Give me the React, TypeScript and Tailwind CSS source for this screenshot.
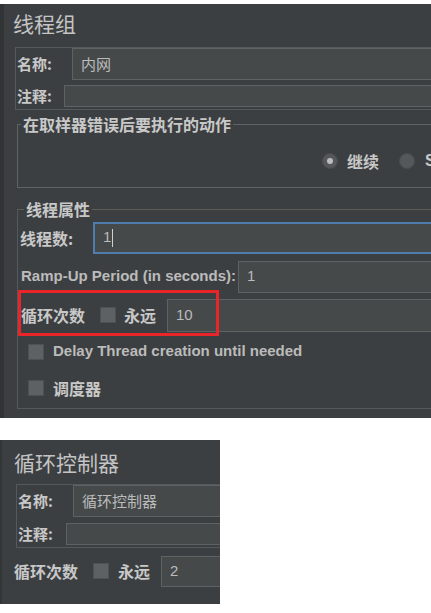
const cjk = { fontFamily: '"Noto Sans CJK SC", "Liberation Sans", sans-serif' };
const latin = { fontFamily: '"Liberation Sans", "Noto Sans CJK SC", sans-serif' };

function Box({ className, children }: { className: string; children?: React.ReactNode }) {
  return (
    <div className={`flex items-center bg-[#45494a] border border-[#5f6263] pl-2 text-[15px] text-[#bbbbbb] ${className}`}>
      {children}
    </div>
  );
}

function Check() {
  return <div className="w-4 h-4 bg-[#5e6163] border border-[#4e5153] shrink-0" />;
}

export default function App() {
  return (
    <div className="w-[431px] h-[613px] bg-white overflow-hidden" style={cjk}>
      <div className="h-1" />

      {/* 线程组 */}
      <div className="relative h-[414px] bg-[#3c3f41] border-l-[4px] border-[#313335] overflow-hidden">
        <div className="pl-[9px] pt-[5px] text-[21px] leading-[28px] text-[#c4c4c4]">线程组</div>

        <div className="mt-[10px] ml-[11px] w-[520px] border border-[#56595b] pb-[1px]">
          <div className="flex items-center">
            <div className="w-[56px] pl-[1px] text-[15px] font-bold text-[#c8c8c8]">名称:</div>
            <Box className="flex-1 h-[32px]">内网</Box>
          </div>
          <div className="flex items-center mt-[5px]">
            <div className="w-[48px] pl-[1px] text-[15px] font-bold text-[#c8c8c8]">注释:</div>
            <Box className="flex-1 h-[22px]" />
          </div>
        </div>

        <div className="relative mt-[14px] ml-[13px] w-[520px] h-[64px] border border-[#606365]">
          <div className="absolute -top-[12px] left-[3px] px-[2px] bg-[#3c3f41] text-[16px] font-bold text-[#c8c8c8] leading-[22px]">
            在取样器错误后要执行的动作
          </div>
          <div className="flex items-center h-full pl-[304px] pt-[10px] text-[16px] font-bold text-[#c8c8c8]">
            <div className="w-4 h-4 rounded-full bg-[#55585a] border border-[#4a4d4f] flex items-center justify-center">
              <div className="w-[6px] h-[6px] rounded-full bg-[#bdbdbd]" />
            </div>
            <span className="ml-[9px]">继续</span>
            <div className="ml-[20px] w-4 h-4 rounded-full bg-[#55585a] border border-[#4a4d4f]" />
            <span className="ml-[10px]" style={latin}>S</span>
          </div>
        </div>

        <div className="relative mt-[21px] ml-[13px] w-[520px] h-[200px] border border-[#56595b] border-t-[#5a5d4f]">
          <div className="absolute -top-[12px] left-[6px] px-[2px] bg-[#3c3f41] text-[16px] font-bold text-[#c8c8c8] leading-[22px]">
            线程属性
          </div>

          <div className="flex items-center mt-[12px]">
            <div className="w-[75px] pl-[2px] text-[16px] font-bold text-[#c8c8c8]">线程数:</div>
            <div className="flex-1 h-[32px] flex items-center pl-2 bg-[#45494a] border-2 border-[#4f7eae] text-[15px] text-[#bbbbbb]" style={latin}>
              1<span className="w-px h-[18px] bg-[#d0d0d0] ml-px" />
            </div>
          </div>

          <div className="flex items-center mt-[7px]">
            <div className="w-[220px] pl-[3px] text-[15px] font-bold text-[#bbbbbb] whitespace-nowrap" style={latin}>
              Ramp-Up Period (in seconds):
            </div>
            <Box className="flex-1 h-[32px]"><span style={latin}>1</span></Box>
          </div>

          <div className="flex items-center mt-[6px]">
            <div className="w-[82px] pl-[3px] text-[16px] font-bold text-[#c8c8c8]">循环次数</div>
            <Check />
            <div className="w-[51px] pl-[8px] text-[16px] font-bold text-[#c8c8c8]">永远</div>
            <Box className="flex-1 h-[33px]"><span style={latin}>10</span></Box>
          </div>

          <div className="flex items-center h-[28px] mt-[6px] pl-[10px]">
            <Check />
            <span className="ml-[9px] text-[15px] font-bold text-[#bbbbbb]" style={latin}>
              Delay Thread creation until needed
            </span>
          </div>

          <div className="flex items-center h-[28px] mt-[8px] pl-[10px]">
            <Check />
            <span className="ml-[9px] text-[16px] font-bold text-[#c8c8c8]">调度器</span>
          </div>
        </div>

        <div className="absolute left-[14px] top-[286px] w-[201px] h-[46px] border-[3px] border-[#e8262a]" />
      </div>

      <div className="h-[22px]" />

      {/* 循环控制器 */}
      <div className="w-[220px] h-[164px] bg-[#3c3f41] border-l-2 border-[#333537] overflow-hidden">
        <div className="pl-[12px] pt-[8px] text-[21px] leading-[28px] text-[#c4c4c4]">循环控制器</div>

        <div className="mt-[8px] ml-[14px] w-[260px] border border-[#56595b] pb-[1px]">
          <div className="flex items-center">
            <div className="w-[56px] pl-[1px] text-[15px] font-bold text-[#c8c8c8]">名称:</div>
            <Box className="flex-1 h-[32px]">循环控制器</Box>
          </div>
          <div className="flex items-center mt-[6px]">
            <div className="w-[49px] pl-[1px] text-[15px] font-bold text-[#c8c8c8]">注释:</div>
            <Box className="flex-1 h-[22px]" />
          </div>
        </div>

        <div className="flex items-center mt-[8px] w-[260px]">
          <div className="w-[91px] pl-[12px] text-[16px] font-bold text-[#c8c8c8]">循环次数</div>
          <Check />
          <div className="w-[52px] pl-[9px] text-[16px] font-bold text-[#c8c8c8]">永远</div>
          <Box className="flex-1 h-[31px]"><span style={latin}>2</span></Box>
        </div>
      </div>
    </div>
  );
}
